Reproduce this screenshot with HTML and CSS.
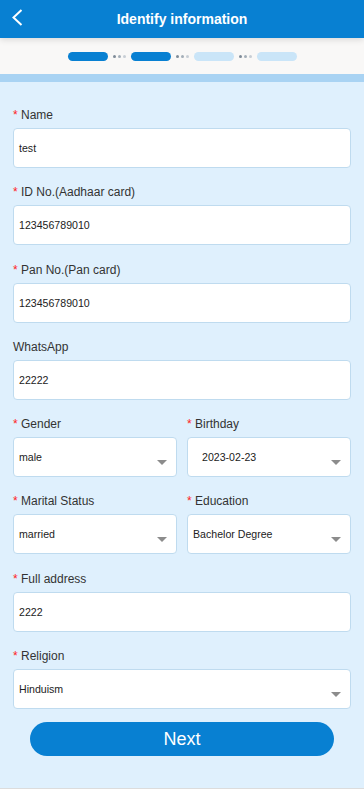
FILE: index.html
```html
<!DOCTYPE html>
<html>
<head>
  <title>Identify information</title>
  <meta charset="utf-8">
  <link rel="stylesheet" href="styles.css">
</head>
<body>
  <div class="header">
    <svg class="back" width="38" height="38" viewBox="0 0 38 38">
      <polyline points="21.5,10 13.5,17.5 21.5,25" fill="none" stroke="#fff" stroke-width="2"/>
    </svg>
    <h1>Identify information</h1>
    <div></div>
  </div>

  <div class="steps">
    <span class="pill on"></span>
    <span class="dots"><i></i><i></i><i></i></span>
    <span class="pill on"></span>
    <span class="dots"><i></i><i></i><i></i></span>
    <span class="pill"></span>
    <span class="dots"><i></i><i></i><i></i></span>
    <span class="pill"></span>
  </div>
  <div class="band"></div>

  <div class="form">
    <div class="field">
      <label><b>*</b> Name</label>
      <div class="box">test</div>
    </div>
    <div class="field">
      <label><b>*</b> ID No.(Aadhaar card)</label>
      <div class="box">123456789010</div>
    </div>
    <div class="field">
      <label><b>*</b> Pan No.(Pan card)</label>
      <div class="box">123456789010</div>
    </div>
    <div class="field">
      <label>WhatsApp</label>
      <div class="box">22222</div>
    </div>

    <div class="row">
      <div class="field">
        <label><b>*</b> Gender</label>
        <div class="box select"><span>male</span><i class="arrow"></i></div>
      </div>
      <div class="field">
        <label><b>*</b> Birthday</label>
        <div class="box select date"><span>2023-02-23</span><i class="arrow"></i></div>
      </div>
    </div>

    <div class="row">
      <div class="field">
        <label><b>*</b> Marital Status</label>
        <div class="box select"><span>married</span><i class="arrow"></i></div>
      </div>
      <div class="field">
        <label><b>*</b> Education</label>
        <div class="box select"><span>Bachelor Degree</span><i class="arrow"></i></div>
      </div>
    </div>

    <div class="field">
      <label><b>*</b> Full address</label>
      <div class="box">2222</div>
    </div>
    <div class="field last">
      <label><b>*</b> Religion</label>
      <div class="box select"><span>Hinduism</span><i class="arrow"></i></div>
    </div>

    <button class="next" type="button">Next</button>
  </div>
</body>
</html>
```

FILE: styles.css
```css
body {
  margin: 0;
  background: #dff0fd;
  font-family: 'Liberation Sans', Arial, sans-serif;
}
.header {
  position: relative;
  z-index: 2;
  display: grid;
  grid-template-columns: 38px 1fr 38px;
  height: 38px;
  background: #0880d2;
  box-shadow: 0 2px 6px rgba(0, 0, 0, 0.12);
}
.back {
  display: block;
}
.header h1 {
  margin: 0;
  color: #fff;
  font-size: 14px;
  font-weight: bold;
  line-height: 38px;
  text-align: center;
}
.steps {
  display: flex;
  justify-content: center;
  align-items: center;
  height: 36px;
  background: #f9f8f7;
}
.pill {
  width: 40px;
  height: 9px;
  border-radius: 5px;
  background: #cae5f8;
}
.pill.on {
  background: #0880d2;
}
.dots {
  display: flex;
  gap: 2px;
  margin: 0 5px;
}
.dots i {
  width: 3px;
  height: 3px;
  border-radius: 50%;
  background: #c7ced5;
}
.dots i:first-child {
  background: #7e8b98;
}
.dots i:nth-child(2) {
  background: #a3aeb8;
}
.band {
  height: 8px;
  background: #a9d3f3;
}
.form {
  padding: 25px 13px 0;
  border-bottom: 2px solid #dcdcdc;
}
.field {
  margin-bottom: 16.3px;
}
.field.last {
  margin-bottom: 13px;
}
.field label {
  display: block;
  margin-bottom: 5px;
  color: #333;
  font-size: 12px;
  line-height: 16px;
}
.field label b {
  color: #f22;
  font-weight: normal;
}
.box {
  display: flex;
  align-items: center;
  box-sizing: border-box;
  height: 40px;
  padding: 0 5px;
  border: 1px solid #bfdbef;
  border-radius: 4px;
  background: #fff;
  color: #222;
  font-size: 10.6px;
}
.select span {
  flex: 1;
}
.date {
  padding-left: 14px;
}
.arrow {
  width: 0;
  height: 0;
  margin: 11px 4px 0 0;
  border-left: 5px solid transparent;
  border-right: 5px solid transparent;
  border-top: 5px solid #8c8c8c;
}
.row {
  display: grid;
  grid-template-columns: 1fr 1fr;
  gap: 10px;
}
.next {
  display: block;
  width: calc(100% - 34px);
  height: 34px;
  margin: 0 17px 32px;
  border: none;
  border-radius: 17px;
  background: #0880d2;
  color: #fff;
  font-family: 'Liberation Sans', Arial, sans-serif;
  font-size: 18px;
}
```
